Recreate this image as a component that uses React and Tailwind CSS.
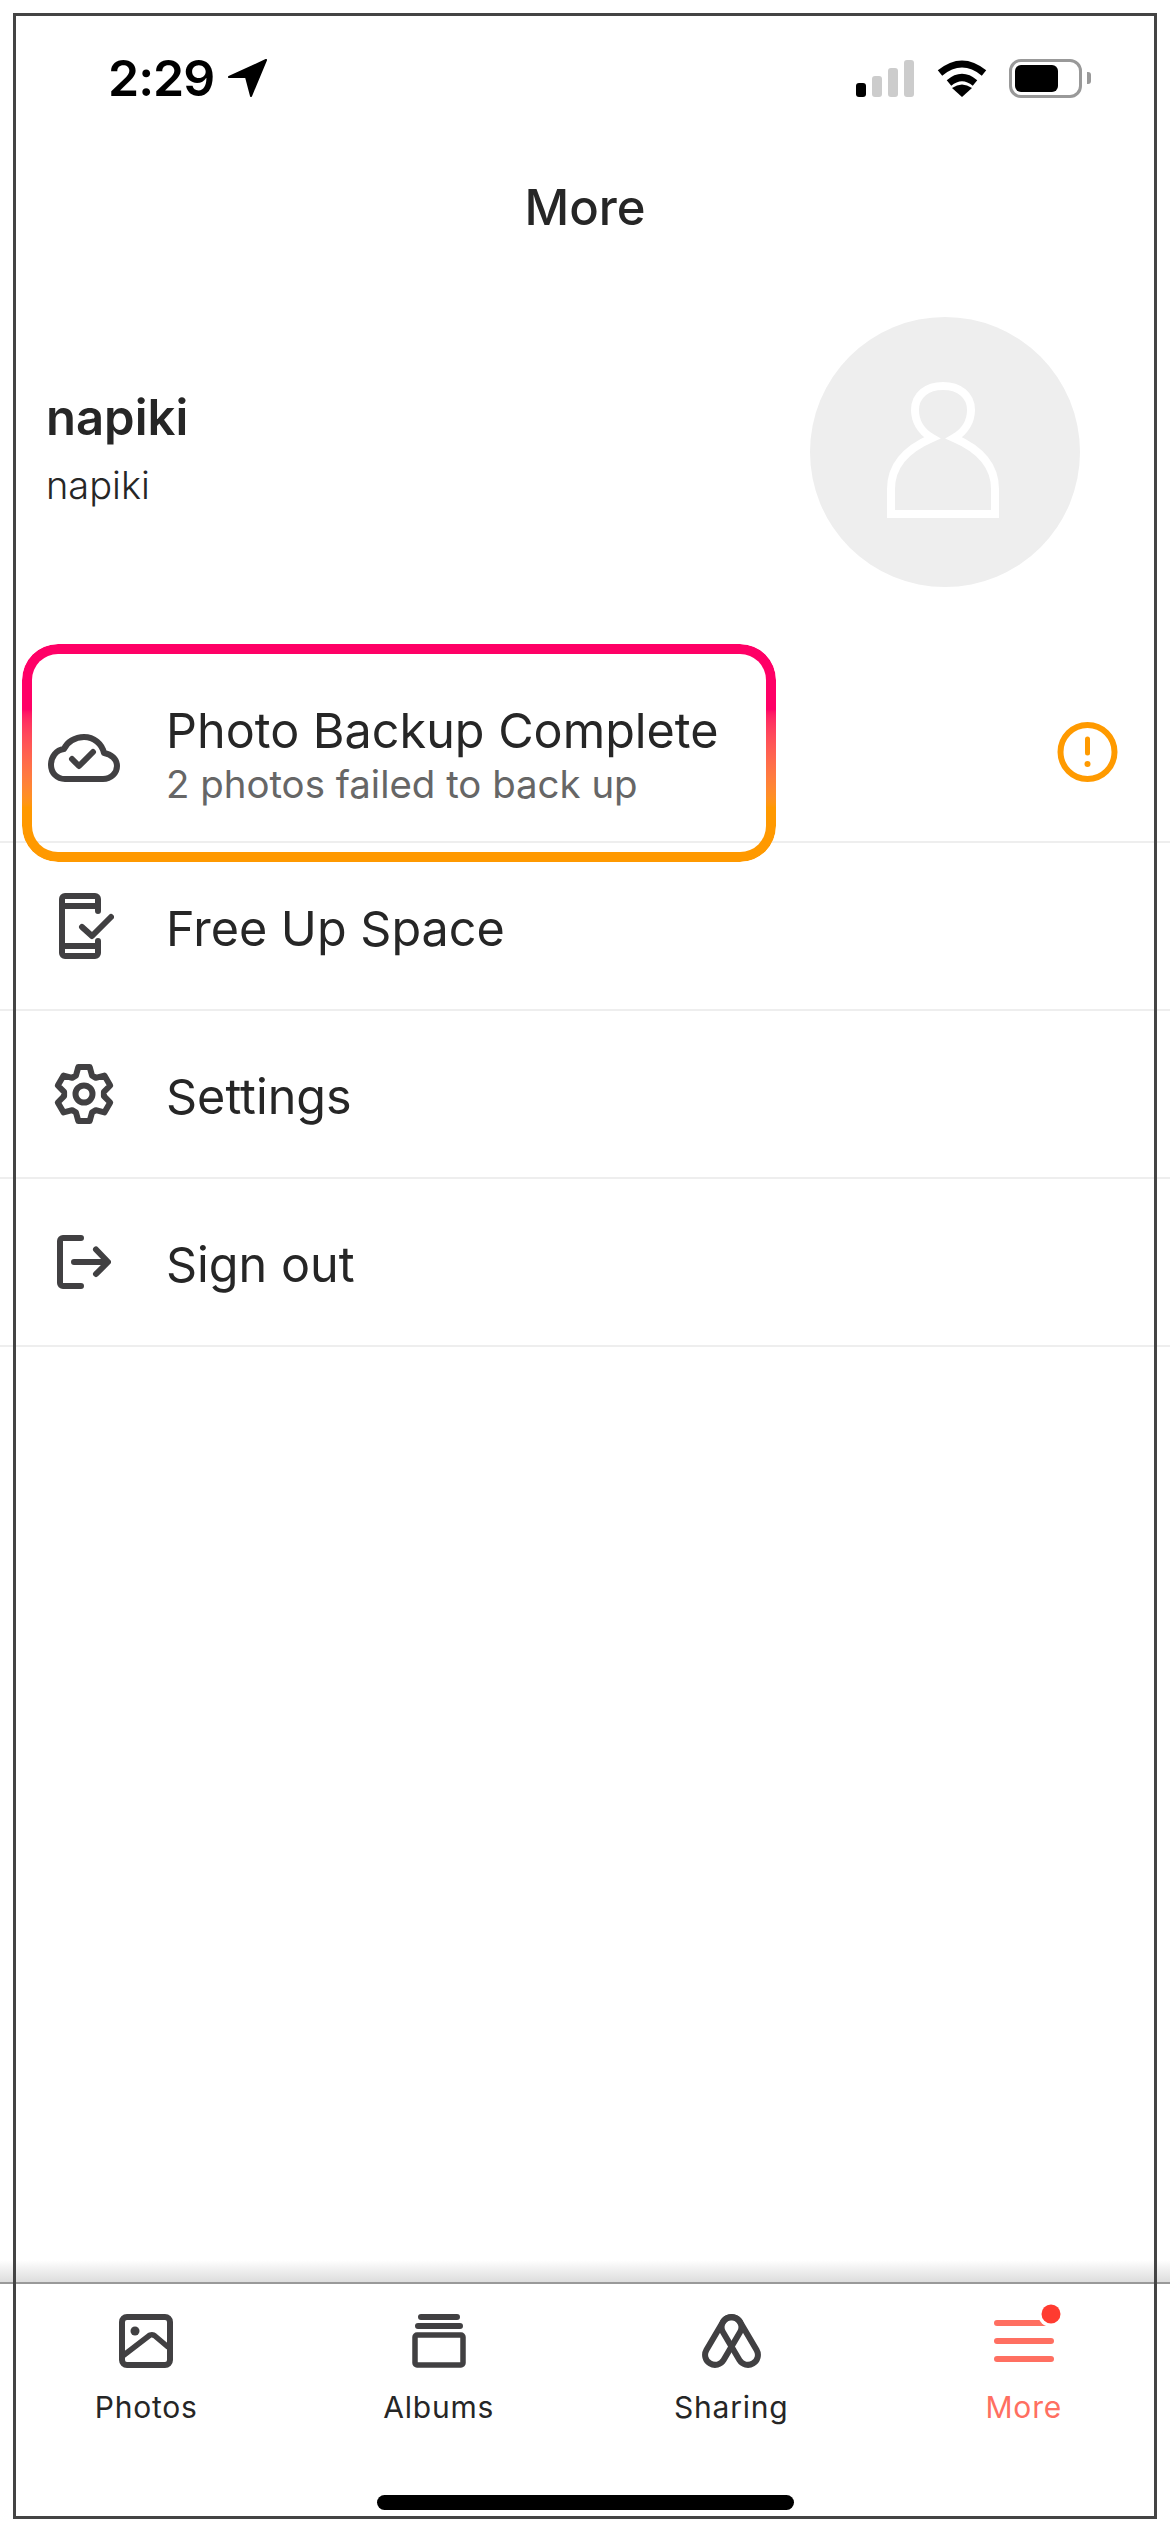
import React from 'react';

const ink = '#414042';

// six tooth gear outline
const gearPoints = Array.from({ length: 6 }, (_, i) => {
  const a = (-90 + i * 60) * (Math.PI / 180);
  const pt = (r, d) => {
    const t = a + (d * Math.PI) / 180;
    return `${(30 + r * Math.cos(t)).toFixed(1)},${(31 + r * Math.sin(t)).toFixed(1)}`;
  };
  return [pt(20, -24), pt(27.5, -12), pt(27.5, 12), pt(20, 24)].join(' ');
}).join(' ');

function CloudIcon() {
  return (
    <svg width="72" height="48" viewBox="0 0 72 48" fill="none" stroke={ink} strokeWidth="6" strokeLinecap="round" strokeLinejoin="round">
      <path d="M17 45H55C63 45 69 39 69 32C69 25 63 20 56 19C54 10 46 3 36 3C27 3 19 8 16 15C8 16 3 23 3 31C3 39 9 45 17 45Z" />
      <path d="M24 25L31 32L45 18" />
    </svg>
  );
}

function PhoneIcon() {
  return (
    <svg width="55" height="66" viewBox="0 0 55 66" fill="none" stroke={ink} strokeWidth="6" strokeLinecap="round" strokeLinejoin="round" className="ml-[5px]">
      <path d="M39 18V6a3 3 0 0 0-3-3H6a3 3 0 0 0-3 3V60a3 3 0 0 0 3 3H36a3 3 0 0 0 3-3V48" />
      <path d="M3 13H39M3 53H39" />
      <path d="M23 34L33 43L52 24" />
    </svg>
  );
}

function GearIcon() {
  return (
    <svg width="60" height="62" viewBox="0 0 60 62" fill="none" stroke={ink} strokeWidth="6" strokeLinejoin="round">
      <polygon points={gearPoints} />
      <circle cx="30" cy="31" r="8.5" />
    </svg>
  );
}

function SignOutIcon() {
  return (
    <svg width="54" height="54" viewBox="0 0 54 54" fill="none" stroke={ink} strokeWidth="6" strokeLinecap="round" strokeLinejoin="round">
      <path d="M24 3H6a3 3 0 0 0-3 3V48a3 3 0 0 0 3 3H24" />
      <path d="M17 27H50M39 14.5L51 27L39 39" />
    </svg>
  );
}

function WarnIcon() {
  return (
    <svg width="61" height="60" viewBox="0 0 61 60" fill="none" stroke="#ff9a00" strokeWidth="6" strokeLinecap="round" className="mb-[12px] mr-[9px]">
      <circle cx="30.5" cy="30" r="27" />
      <path d="M30.5 17V31" strokeWidth="5" />
      <circle cx="30.5" cy="42" r="3" fill="#ff9a00" stroke="none" />
    </svg>
  );
}

function PhotosTab() {
  return (
    <svg width="54" height="54" viewBox="0 0 54 54" fill="none" stroke={ink} strokeWidth="6" strokeLinecap="round" strokeLinejoin="round">
      <rect x="3" y="3" width="48" height="48" rx="5" />
      <circle cx="16" cy="17" r="4.5" fill={ink} stroke="none" />
      <path d="M5 41L31 21Q34 20 36 22L49 33" strokeWidth="5.5" />
    </svg>
  );
}

function AlbumsTab() {
  return (
    <svg width="54" height="54" viewBox="0 0 54 54" fill="none" stroke={ink} strokeWidth="6" strokeLinecap="round" strokeLinejoin="round">
      <path d="M9 3H45M6 12H48" />
      <rect x="3" y="21" width="48" height="30" rx="2" strokeWidth="5.5" />
    </svg>
  );
}

function SharingTab() {
  return (
    <svg width="59" height="54" viewBox="0 0 59 54" fill="none" stroke={ink} strokeWidth="6" strokeLinejoin="round">
      <path d="M20.9 7.9A10 10 0 0 1 38.1 18.1L21.6 46.1A10 10 0 0 1 4.4 35.9Z" />
      <path d="M38.1 7.9A10 10 0 0 0 20.9 18.1L37.4 46.1A10 10 0 0 0 54.6 35.9Z" />
    </svg>
  );
}

function MoreTab() {
  return (
    <svg width="60" height="54" viewBox="0 0 60 54" className="overflow-visible">
      <rect x="0" y="6" width="60" height="6" rx="3" fill="#ff6f61" />
      <rect x="0" y="24" width="60" height="6" rx="3" fill="#ff6f61" />
      <rect x="0" y="42" width="60" height="6" rx="3" fill="#ff6f61" />
      <circle cx="57" cy="0" r="13" fill="#fff" />
      <circle cx="57" cy="0" r="9.5" fill="#ff3b30" />
    </svg>
  );
}

function StatusBar() {
  return (
    <div className="h-[156px] flex justify-between items-start pt-[48px] pl-[108px] pr-[79px]">
      <div className="flex items-center h-[60px] gap-[14px]">
        <span className="text-[50px] leading-[60px] font-semibold text-black font-['Inter',sans-serif] tracking-[-1px]">2:29</span>
        <svg width="40" height="38" viewBox="0 0 40 38" fill="#000" stroke="#000" strokeWidth="2" strokeLinejoin="round">
          <path d="M38 1L1 18H18L23 37Z" />
        </svg>
      </div>
      <div className="flex items-center h-[60px]">
        <div className="flex items-end gap-[6px] h-[37px]">
          <div className="w-[10px] h-[14px] rounded-[3px] bg-black"></div>
          <div className="w-[10px] h-[21px] rounded-[3px] bg-[#cccccc]"></div>
          <div className="w-[10px] h-[29px] rounded-[3px] bg-[#cccccc]"></div>
          <div className="w-[10px] h-[37px] rounded-[3px] bg-[#cccccc]"></div>
        </div>
        <svg width="50" height="37" viewBox="0 0 50 37" fill="none" stroke="#000" strokeWidth="7" className="ml-[23px]">
          <path d="M3 13Q25 -5 47 13" />
          <path d="M12 23Q25 12 38 23" />
          <path d="M25 37L15 28Q25 21 35 28Z" fill="#000" stroke="none" />
        </svg>
        <div className="ml-[22px] w-[73px] h-[39px] rounded-[12px] border-[3px] border-[#999999] p-[3px] bg-white">
          <div className="w-[43px] h-full rounded-[6px] bg-black"></div>
        </div>
        <div className="ml-[5px] w-[4px] h-[12px] rounded-r-[3px] bg-[#999999]"></div>
      </div>
    </div>
  );
}

function MenuRow({ icon, title, subtitle, right }) {
  return (
    <div className="h-[168px] border-b-2 border-[#eeeeee] flex items-center pl-[48px] pr-[43px]">
      <div className="w-[72px] flex justify-center shrink-0">{icon}</div>
      <div className={`ml-[46px] flex-1 ${subtitle ? 'pb-[9px]' : 'pt-[5px]'}`}>
        <div className="text-[48.5px] leading-[58px] text-[#262626]">{title}</div>
        {subtitle && <div className="mt-[3px] text-[38.4px] leading-[42px] text-[#666666]">{subtitle}</div>}
      </div>
      {right}
    </div>
  );
}

function Tab({ icon, label, active }) {
  return (
    <div className="flex flex-col items-center pt-[30px]">
      <div className="h-[54px] flex items-center justify-center">{icon}</div>
      <div className={`mt-[19px] text-[30px] leading-[40px] tracking-[0.8px] ${active ? 'text-[#ff6f61]' : 'text-[#262626]'}`}>{label}</div>
    </div>
  );
}

export default function App() {
  return (
    <div className="relative h-[2532px] w-[1170px] bg-white flex flex-col font-['Inter',sans-serif] overflow-hidden">
      <StatusBar />

      <div className="h-[104px] flex items-center justify-center text-[49px] font-medium text-[#262626]">More</div>

      {/* Profile */}
      <div className="h-[415px] flex items-center justify-between pl-[46px] pr-[90px] pb-[32px]">
        <div className="pb-[6px]">
          <div className="text-[49px] leading-[60px] font-semibold text-[#262626]">napiki</div>
          <div className="mt-[13px] text-[38px] leading-[48px] font-light text-[#262626]">napiki</div>
        </div>
        <div className="w-[270px] h-[270px] rounded-full bg-[#eeeeee] flex items-center justify-center">
          <svg width="112" height="136" viewBox="895 381 112 136" fill="none" stroke="#fff" strokeWidth="8" className="mr-[4px] mb-[4px]">
            <path d="M899 513V488C899 466 912 449 940 437C928 430 923 419 923 409C923 394 935 385 951 385C967 385 979 394 979 409C979 419 974 430 962 437C990 449 1003 466 1003 488V513Z" />
          </svg>
        </div>
      </div>

      {/* Menu */}
      <div>
        <MenuRow icon={<CloudIcon />} title="Photo Backup Complete" subtitle="2 photos failed to back up" right={<WarnIcon />} />
        <MenuRow icon={<PhoneIcon />} title="Free Up Space" />
        <MenuRow icon={<GearIcon />} title="Settings" />
        <MenuRow icon={<SignOutIcon />} title="Sign out" />
      </div>

      <div className="flex-1"></div>

      {/* Tab bar */}
      <div className="h-[22px] bg-gradient-to-b from-white to-[#dddddd]"></div>
      <div className="h-[250px] border-t-2 border-[#999999] relative">
        <div className="grid grid-cols-4">
          <Tab icon={<PhotosTab />} label="Photos" />
          <Tab icon={<AlbumsTab />} label="Albums" />
          <Tab icon={<SharingTab />} label="Sharing" />
          <Tab icon={<MoreTab />} label="More" active />
        </div>
        <div className="absolute left-[377px] top-[211px] w-[417px] h-[15px] rounded-full bg-black"></div>
      </div>

      {/* Annotation drawn over the screenshot */}
      <div className="absolute left-[22px] top-[644px] w-[754px] h-[218px] rounded-[36px] p-[10px] bg-gradient-to-b from-[#ff0066] from-30% to-[#ff9900] to-75% [mask-image:linear-gradient(#fff,#fff),linear-gradient(#fff,#fff)] [mask-clip:content-box,border-box] [mask-origin:content-box,border-box] [mask-composite:exclude]"></div>
      <div className="absolute left-[13px] top-[13px] w-[1144px] h-[2506px] border-[3px] border-[#444444] pointer-events-none"></div>
    </div>
  );
}
